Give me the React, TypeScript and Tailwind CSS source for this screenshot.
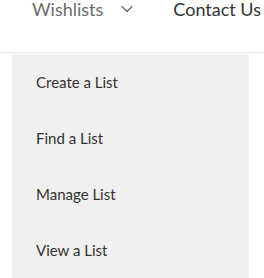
import { ChevronDown } from 'lucide-react';

const items = ['Create a List', 'Find a List', 'Manage List', 'View a List'];

export default function App() {
  return (
    <div className="relative h-[278px] w-[264px] overflow-hidden bg-white font-['Lato',sans-serif]">
      {/* Top nav */}
      <div className="h-[56px] border-b border-[#ececec]">
        <div className="-mt-[3px] flex items-center whitespace-nowrap pl-[32px] text-[18px] leading-[24px]">
          <span className="shrink-0 text-[#6b6b6b]">Wishlists</span>
          <ChevronDown size={20} strokeWidth={1.6} className="ml-[14px] shrink-0 text-[#6b6b6b]" />
          <span className="ml-[36px] shrink-0 text-[#333]">Contact Us</span>
        </div>
      </div>

      {/* Dropdown */}
      <div className="absolute left-[12px] top-[54px] h-[224px] w-[237px] bg-[#f0f0f0] pl-[24px]">
        {items.map((item) => (
          <div key={item} className="flex h-[56px] items-center text-[15px] text-[#333]">
            {item}
          </div>
        ))}
      </div>
    </div>
  );
}
